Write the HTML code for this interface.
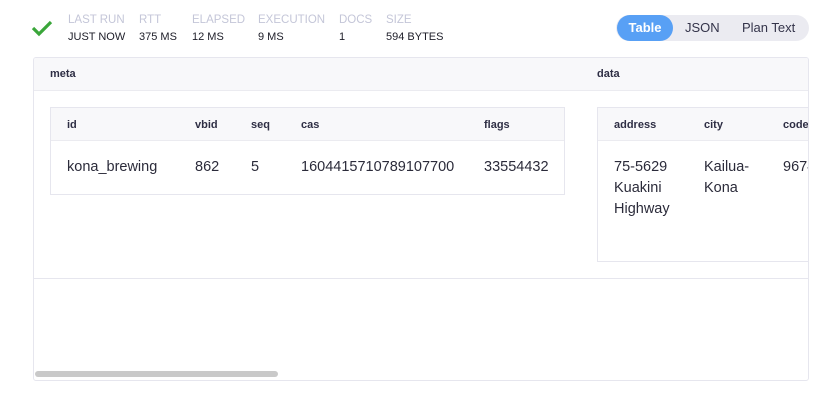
<!DOCTYPE html>
<html><head><style>
*{box-sizing:border-box;margin:0;padding:0}
body{width:838px;height:408px;background:#fff;font-family:"Liberation Sans",sans-serif;color:#2b2b3a;position:relative;overflow:hidden}
.a{position:absolute}
.lbl{font-size:11.5px;color:#c4c6d8;top:14px}
.val{font-size:11px;color:#1d1d28;top:31px}
.th{font-size:11px;font-weight:bold;color:#2e2e44}
.td{font-size:14.5px;color:#2b2b3a;line-height:21px}
</style></head><body>
<svg class="a" style="left:31px;top:19px" width="22" height="18" viewBox="0 0 22 18"><path d="M2 9 L8 15 L20 3" fill="none" stroke="#3aa63a" stroke-width="3.2"/></svg>
<div class="a lbl" style="left:68px">LAST RUN</div><div class="a val" style="left:68px">JUST NOW</div>
<div class="a lbl" style="left:139px">RTT</div><div class="a val" style="left:139px">375 MS</div>
<div class="a lbl" style="left:192px">ELAPSED</div><div class="a val" style="left:192px">12 MS</div>
<div class="a lbl" style="left:258px">EXECUTION</div><div class="a val" style="left:258px">9 MS</div>
<div class="a lbl" style="left:339px">DOCS</div><div class="a val" style="left:339px">1</div>
<div class="a lbl" style="left:386px">SIZE</div><div class="a val" style="left:386px">594 BYTES</div>
<div class="a" style="left:616px;top:15px;width:193px;height:26px;border-radius:13px;background:#ebebf1"></div>
<div class="a" style="left:617px;top:15px;width:56px;height:26px;border-radius:13px;background:#58a0f5;color:#fff;font-size:13px;font-weight:bold;text-align:center;line-height:26px">Table</div>
<div class="a" style="left:685px;top:15px;font-size:13px;line-height:26px;color:#34344a">JSON</div>
<div class="a" style="left:742px;top:15px;font-size:13px;line-height:26px;color:#34344a">Plan Text</div>
<div class="a" style="left:33px;top:57px;width:776px;height:324px;border:1px solid #e6e6ee;border-radius:3px;overflow:hidden">
<div style="position:relative;left:-34px;top:-58px;width:838px;height:408px">
<div class="a" style="left:33px;top:57px;width:780px;height:222px;border:1px solid #e6e6ee"></div>
<div class="a" style="left:34px;top:58px;width:778px;height:33px;background:#f8f8fa;border-bottom:1px solid #ebebf0"></div>
<div class="a th" style="left:50px;top:68px">meta</div>
<div class="a th" style="left:597px;top:68px">data</div>
<div class="a" style="left:50px;top:107px;width:515px;height:88px;border:1px solid #e6e6ee"></div>
<div class="a" style="left:51px;top:108px;width:513px;height:33px;background:#f8f8fa;border-bottom:1px solid #ebebf0"></div>
<div class="a th" style="left:67px;top:119px">id</div>
<div class="a th" style="left:195px;top:119px">vbid</div>
<div class="a th" style="left:251px;top:119px">seq</div>
<div class="a th" style="left:301px;top:119px">cas</div>
<div class="a th" style="left:484px;top:119px">flags</div>
<div class="a td" style="left:67px;top:157px">kona_brewing</div>
<div class="a td" style="left:195px;top:157px">862</div>
<div class="a td" style="left:251px;top:157px">5</div>
<div class="a td" style="left:301px;top:157px">1604415710789107700</div>
<div class="a td" style="left:484px;top:157px">33554432</div>
<div class="a" style="left:597px;top:107px;width:230px;height:155px;border:1px solid #e6e6ee"></div>
<div class="a" style="left:598px;top:108px;width:228px;height:33px;background:#f8f8fa;border-bottom:1px solid #ebebf0"></div>
<div class="a th" style="left:614px;top:119px">address</div>
<div class="a th" style="left:704px;top:119px">city</div>
<div class="a th" style="left:783px;top:119px">code</div>
<div class="a td" style="left:614px;top:157px;width:80px">75-5629 Kuakini Highway</div>
<div class="a td" style="left:704px;top:157px;width:60px">Kailua-Kona</div>
<div class="a td" style="left:783px;top:157px;white-space:nowrap">96740</div>
<div class="a" style="left:35px;top:371px;width:243px;height:6px;border-radius:3px;background:#c9c9c9"></div>
</div></div>
</body></html>
